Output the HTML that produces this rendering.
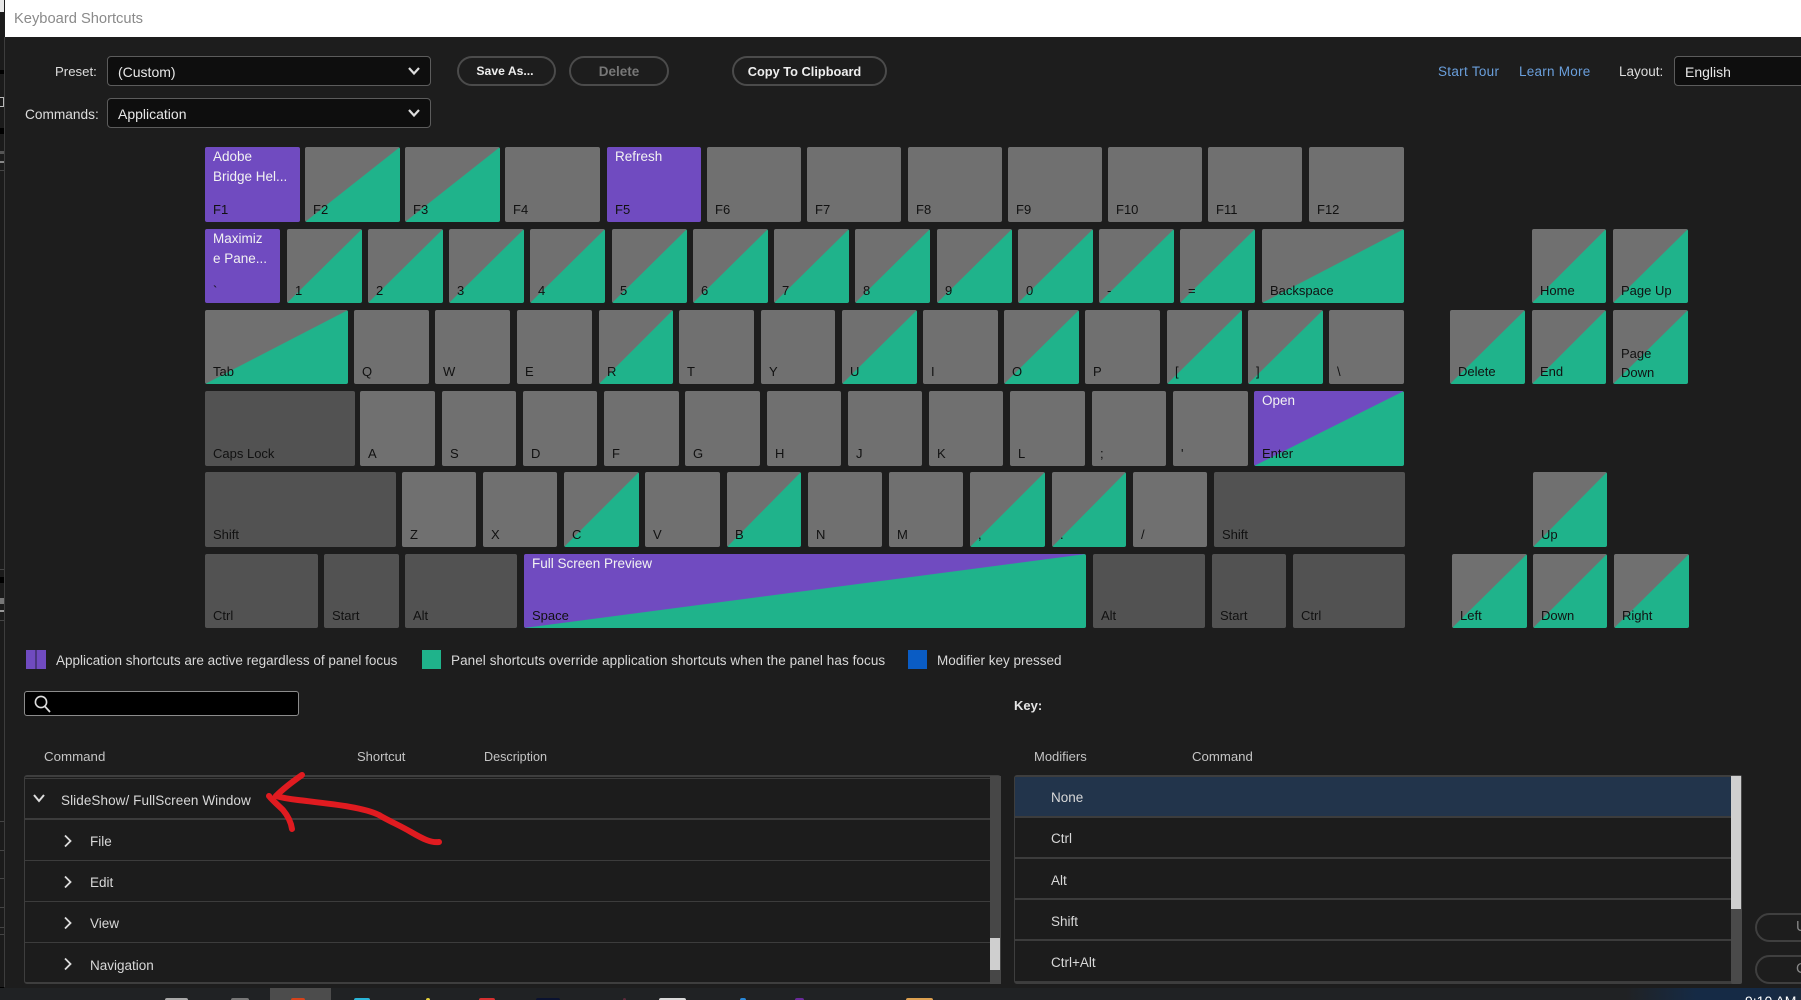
<!DOCTYPE html>
<html><head><meta charset="utf-8"><title>Keyboard Shortcuts</title>
<style>
html,body{margin:0;padding:0;width:1801px;height:1000px;overflow:hidden;background:#1d1d1d}
body{position:relative;font-family:"Liberation Sans",sans-serif;font-size:13.5px;color:#d8d8d8}
.a{position:absolute;white-space:nowrap}
.t{position:absolute;white-space:nowrap;line-height:18px;height:18px}
.k{position:absolute;background:#707070;border-radius:2px;overflow:hidden;color:#111;font-size:13px}
.k b{position:absolute;left:8px;bottom:4px;font-weight:normal;line-height:16px;white-space:nowrap}
.k i{position:absolute;left:8px;top:0;font-style:normal;font-size:13.5px;color:#f2f2f2;line-height:19.5px;white-space:nowrap}
.d{background:#525252}
.g{background:linear-gradient(to bottom right,#707070 49.7%,#1fb38b 50.3%)}
.p{background:#704bc0}
.pg{background:linear-gradient(to bottom right,#704bc0 49.8%,#1fb38b 50.2%)}
.r1{top:147px;height:75px}.r2{top:229px;height:74px}.r3{top:310px;height:74px}
.r4{top:391px;height:75px}.r5{top:472px;height:75px}.r6{top:554px;height:74px}
.sel{position:absolute;background:#0e0e0e;border:1px solid #5c5c5c;border-radius:4px;box-sizing:border-box;height:30px;left:107px;width:324px;color:#e8e8e8;line-height:30px;padding-left:10px;font-size:14px}
.btn{position:absolute;top:56px;height:30px;box-sizing:border-box;border:2px solid #4b4b4b;border-radius:15px;text-align:center;line-height:27px;font-weight:bold;font-size:12.5px;color:#eee}
.ln{position:absolute;height:1px;background:#3c3c3c}
.s{position:absolute;left:0;width:4px}
.ti{position:absolute;top:998px;height:2px;border-radius:2px 2px 0 0}
</style></head><body>

<div class="a" style="left:5px;top:0;width:1796px;height:37px;background:#fff"></div>
<div class="t" style="left:14px;top:10px;color:#8a8a8a;font-size:14.7px">Keyboard Shortcuts</div>

<!-- left strip -->
<div class="a" style="left:4px;top:37px;width:1px;height:950px;background:#3d3d3d"></div>
<div class="s" style="top:0;height:12px;background:#e8e8e8"></div>
<div class="s" style="top:12px;height:976px;background:#1b1b1b"></div>
<div class="s" style="top:70px;height:4px;background:#000"></div>
<div class="s" style="top:97px;height:10px;border:1px solid #bbb;border-left:0;box-sizing:border-box"></div>
<div class="s" style="top:128px;height:6px;background:#000"></div>
<div class="s" style="top:151px;height:3px;background:#555"></div>
<div class="s" style="top:161px;height:2px;background:#888"></div>
<div class="s" style="top:170px;height:1px;background:#444"></div>
<div class="s" style="top:569px;height:1px;background:#444"></div>
<div class="s" style="top:577px;height:6px;background:#000"></div>
<div class="s" style="top:598px;height:6px;background:#777"></div>
<div class="s" style="top:610px;height:2px;background:#999"></div>
<div class="s" style="top:620px;height:1px;background:#444"></div>
<div class="s" style="top:821px;height:1px;background:#444"></div>
<div class="s" style="top:850px;height:1px;background:#444"></div>
<div class="s" style="top:878px;height:1px;background:#444"></div>
<div class="s" style="top:907px;height:1px;background:#444"></div>
<div class="s" style="top:927px;height:1px;background:#444"></div>
<div class="s" style="top:934px;height:1px;background:#444"></div>
<div class="s" style="top:987px;height:1px;background:#000"></div>

<!-- top controls -->
<div class="t" style="left:55px;top:63px;color:#ddd;font-size:13.2px">Preset:</div>
<div class="t" style="left:25px;top:106px;color:#ddd;font-size:13.7px">Commands:</div>
<div class="sel" style="top:56px">(Custom)<svg style="position:absolute;left:299px;top:9px" width="14" height="10"><polyline points="2,2 7,7.5 12,2" fill="none" stroke="#ddd" stroke-width="2.2"/></svg></div>
<div class="sel" style="top:98px">Application<svg style="position:absolute;left:299px;top:9px" width="14" height="10"><polyline points="2,2 7,7.5 12,2" fill="none" stroke="#ddd" stroke-width="2.2"/></svg></div>
<div class="btn" style="left:457px;width:99px;font-size:12.2px;padding-right:3px">Save As...</div>
<div class="btn" style="left:569px;width:100px;color:#777;font-size:13.5px">Delete</div>
<div class="btn" style="left:732px;width:155px;font-size:12.8px;padding-right:10px">Copy To Clipboard</div>
<div class="t" style="left:1438px;top:63px;color:#6a9fdc;letter-spacing:.3px">Start Tour</div>
<div class="t" style="left:1519px;top:63px;color:#6a9fdc;letter-spacing:.25px">Learn More</div>
<div class="t" style="left:1619px;top:63px;color:#ddd">Layout:</div>
<div class="sel" style="left:1674px;top:56px;width:140px">English</div>

<!-- keyboard row 1 -->
<div class="k p r1" style="left:205px;width:95px"><i>Adobe<br>Bridge Hel...</i><b>F1</b></div>
<div class="k g r1" style="left:305px;width:95px"><b>F2</b></div>
<div class="k g r1" style="left:405px;width:95px"><b>F3</b></div>
<div class="k r1" style="left:505px;width:95px"><b>F4</b></div>
<div class="k p r1" style="left:607px;width:94px"><i>Refresh</i><b>F5</b></div>
<div class="k r1" style="left:707px;width:94px"><b>F6</b></div>
<div class="k r1" style="left:807px;width:94px"><b>F7</b></div>
<div class="k r1" style="left:908px;width:94px"><b>F8</b></div>
<div class="k r1" style="left:1008px;width:94px"><b>F9</b></div>
<div class="k r1" style="left:1108px;width:94px"><b>F10</b></div>
<div class="k r1" style="left:1208px;width:94px"><b>F11</b></div>
<div class="k r1" style="left:1309px;width:95px"><b>F12</b></div>
<!-- row 2 -->
<div class="k p r2" style="left:205px;width:75px"><i>Maximiz<br>e Pane...</i><b>`</b></div>
<div class="k g r2" style="left:287px;width:75px"><b>1</b></div>
<div class="k g r2" style="left:368px;width:75px"><b>2</b></div>
<div class="k g r2" style="left:449px;width:75px"><b>3</b></div>
<div class="k g r2" style="left:530px;width:75px"><b>4</b></div>
<div class="k g r2" style="left:612px;width:75px"><b>5</b></div>
<div class="k g r2" style="left:693px;width:75px"><b>6</b></div>
<div class="k g r2" style="left:774px;width:75px"><b>7</b></div>
<div class="k g r2" style="left:855px;width:75px"><b>8</b></div>
<div class="k g r2" style="left:937px;width:75px"><b>9</b></div>
<div class="k g r2" style="left:1018px;width:75px"><b>0</b></div>
<div class="k g r2" style="left:1099px;width:75px"><b>-</b></div>
<div class="k g r2" style="left:1180px;width:75px"><b>=</b></div>
<div class="k g r2" style="left:1262px;width:142px"><b>Backspace</b></div>
<div class="k g r2" style="left:1532px;width:74px"><b>Home</b></div>
<div class="k g r2" style="left:1613px;width:75px"><b>Page Up</b></div>
<!-- row 3 -->
<div class="k g r3" style="left:205px;width:143px"><b>Tab</b></div>
<div class="k r3" style="left:354px;width:75px"><b>Q</b></div>
<div class="k r3" style="left:435px;width:75px"><b>W</b></div>
<div class="k r3" style="left:517px;width:75px"><b>E</b></div>
<div class="k g r3" style="left:599px;width:74px"><b>R</b></div>
<div class="k r3" style="left:679px;width:75px"><b>T</b></div>
<div class="k r3" style="left:761px;width:74px"><b>Y</b></div>
<div class="k g r3" style="left:842px;width:75px"><b>U</b></div>
<div class="k r3" style="left:923px;width:75px"><b>I</b></div>
<div class="k g r3" style="left:1004px;width:75px"><b>O</b></div>
<div class="k r3" style="left:1085px;width:75px"><b>P</b></div>
<div class="k g r3" style="left:1167px;width:75px"><b>[</b></div>
<div class="k g r3" style="left:1248px;width:75px"><b>]</b></div>
<div class="k r3" style="left:1329px;width:75px"><b>\</b></div>
<div class="k g r3" style="left:1450px;width:75px"><b>Delete</b></div>
<div class="k g r3" style="left:1532px;width:74px"><b>End</b></div>
<div class="k g r3" style="left:1613px;width:75px"><b style="white-space:normal;line-height:19px;width:50px;bottom:2px">Page Down</b></div>
<!-- row 4 -->
<div class="k d r4" style="left:205px;width:150px"><b>Caps Lock</b></div>
<div class="k r4" style="left:360px;width:75px"><b>A</b></div>
<div class="k r4" style="left:442px;width:74px"><b>S</b></div>
<div class="k r4" style="left:523px;width:74px"><b>D</b></div>
<div class="k r4" style="left:604px;width:75px"><b>F</b></div>
<div class="k r4" style="left:685px;width:75px"><b>G</b></div>
<div class="k r4" style="left:767px;width:74px"><b>H</b></div>
<div class="k r4" style="left:848px;width:74px"><b>J</b></div>
<div class="k r4" style="left:929px;width:74px"><b>K</b></div>
<div class="k r4" style="left:1010px;width:75px"><b>L</b></div>
<div class="k r4" style="left:1092px;width:74px"><b>;</b></div>
<div class="k r4" style="left:1173px;width:75px"><b>'</b></div>
<div class="k pg r4" style="left:1254px;width:150px"><i>Open</i><b>Enter</b></div>
<!-- row 5 -->
<div class="k d r5" style="left:205px;width:191px"><b>Shift</b></div>
<div class="k r5" style="left:402px;width:74px"><b>Z</b></div>
<div class="k r5" style="left:483px;width:74px"><b>X</b></div>
<div class="k g r5" style="left:564px;width:75px"><b>C</b></div>
<div class="k r5" style="left:645px;width:75px"><b>V</b></div>
<div class="k g r5" style="left:727px;width:74px"><b>B</b></div>
<div class="k r5" style="left:808px;width:74px"><b>N</b></div>
<div class="k r5" style="left:889px;width:74px"><b>M</b></div>
<div class="k g r5" style="left:970px;width:75px"><b>,</b></div>
<div class="k g r5" style="left:1052px;width:74px"><b>.</b></div>
<div class="k r5" style="left:1133px;width:74px"><b>/</b></div>
<div class="k d r5" style="left:1214px;width:191px"><b>Shift</b></div>
<div class="k g r5" style="left:1533px;width:74px"><b>Up</b></div>
<!-- row 6 -->
<div class="k d r6" style="left:205px;width:113px"><b>Ctrl</b></div>
<div class="k d r6" style="left:324px;width:75px"><b>Start</b></div>
<div class="k d r6" style="left:405px;width:112px"><b>Alt</b></div>
<div class="k pg r6" style="left:524px;width:562px"><i>Full Screen Preview</i><b>Space</b></div>
<div class="k d r6" style="left:1093px;width:112px"><b>Alt</b></div>
<div class="k d r6" style="left:1212px;width:74px"><b>Start</b></div>
<div class="k d r6" style="left:1293px;width:112px"><b>Ctrl</b></div>
<div class="k g r6" style="left:1452px;width:75px"><b>Left</b></div>
<div class="k g r6" style="left:1533px;width:74px"><b>Down</b></div>
<div class="k g r6" style="left:1614px;width:75px"><b>Right</b></div>

<!-- legend -->
<div class="a" style="left:26px;top:650px;width:20px;height:19px;background:linear-gradient(to right,#704bc0 46%,#4a3580 46%,#4a3580 54%,#704bc0 54%)"></div>
<div class="t" style="left:56px;top:652px">Application shortcuts are active regardless of panel focus</div>
<div class="a" style="left:422px;top:650px;width:19px;height:19px;background:#1fb38b"></div>
<div class="t" style="left:451px;top:652px;letter-spacing:.07px">Panel shortcuts override application shortcuts when the panel has focus</div>
<div class="a" style="left:908px;top:650px;width:19px;height:19px;background:#0a5cc4"></div>
<div class="t" style="left:937px;top:652px">Modifier key pressed</div>

<!-- search -->
<div class="a" style="left:24px;top:691px;width:275px;height:25px;box-sizing:border-box;background:#000;border:1px solid #8c8c8c;border-radius:3px"></div>
<svg class="a" style="left:32px;top:693px" width="20" height="22"><circle cx="9" cy="9" r="5.6" fill="none" stroke="#ddd" stroke-width="1.6"/><line x1="13" y1="13.5" x2="18" y2="19" stroke="#ddd" stroke-width="1.8"/></svg>
<div class="t" style="left:1014px;top:697px;font-weight:bold;font-size:13px;color:#e4e4e4">Key:</div>

<!-- headers -->
<div class="t" style="left:44px;top:748px;color:#c4c4c4;font-size:13.3px">Command</div>
<div class="t" style="left:357px;top:748px;color:#c4c4c4;font-size:13px">Shortcut</div>
<div class="t" style="left:484px;top:748px;color:#c4c4c4;font-size:12.6px">Description</div>
<div class="t" style="left:1034px;top:748px;color:#c4c4c4;font-size:13px">Modifiers</div>
<div class="t" style="left:1192px;top:748px;color:#c4c4c4;font-size:13.2px">Command</div>

<!-- left table -->
<div class="a" style="left:24px;top:775px;width:977px;height:209px;box-sizing:border-box;border:1px solid #3e3e3e;border-top:2px solid #3e3e3e;border-bottom:2px solid #3e3e3e;border-radius:3px;background:#1c1c1c"></div>
<div class="ln" style="left:25px;top:778px;width:965px"></div>
<div class="ln" style="left:25px;top:818px;width:965px;height:2px"></div>
<div class="ln" style="left:25px;top:860px;width:965px"></div>
<div class="ln" style="left:25px;top:901px;width:965px"></div>
<div class="ln" style="left:25px;top:942px;width:965px"></div>
<div class="a" style="left:990px;top:776px;width:11px;height:208px;background:#474747"></div>
<div class="a" style="left:990px;top:938px;width:10px;height:32px;background:#cfcfcf"></div>
<svg class="a" style="left:32px;top:793px" width="14" height="12"><polyline points="2,2 7,8 12,2" fill="none" stroke="#ddd" stroke-width="2"/></svg>
<svg class="a" style="left:63px;top:834px" width="10" height="14"><polyline points="2,1.5 7.5,7 2,12.5" fill="none" stroke="#ddd" stroke-width="1.8"/></svg>
<svg class="a" style="left:63px;top:875px" width="10" height="14"><polyline points="2,1.5 7.5,7 2,12.5" fill="none" stroke="#ddd" stroke-width="1.8"/></svg>
<svg class="a" style="left:63px;top:916px" width="10" height="14"><polyline points="2,1.5 7.5,7 2,12.5" fill="none" stroke="#ddd" stroke-width="1.8"/></svg>
<svg class="a" style="left:63px;top:957px" width="10" height="14"><polyline points="2,1.5 7.5,7 2,12.5" fill="none" stroke="#ddd" stroke-width="1.8"/></svg>
<div class="t" style="left:61px;top:792px;letter-spacing:.08px">SlideShow/ FullScreen Window</div>
<div class="t" style="left:90px;top:833px">File</div>
<div class="t" style="left:90px;top:874px">Edit</div>
<div class="t" style="left:90px;top:915px">View</div>
<div class="t" style="left:90px;top:957px">Navigation</div>

<!-- right table -->
<div class="a" style="left:1014px;top:775px;width:728px;height:209px;box-sizing:border-box;border:1px solid #3e3e3e;border-top:2px solid #3e3e3e;border-bottom:2px solid #3e3e3e;border-radius:3px;background:#1c1c1c"></div>
<div class="a" style="left:1015px;top:777px;width:716px;height:39px;background:#22344b"></div>
<div class="ln" style="left:1015px;top:816px;width:716px;height:2px"></div>
<div class="ln" style="left:1015px;top:857px;width:716px;height:2px"></div>
<div class="ln" style="left:1015px;top:898px;width:716px;height:2px"></div>
<div class="ln" style="left:1015px;top:939px;width:716px;height:2px"></div>
<div class="ln" style="left:1015px;top:981px;width:716px;height:1px"></div>
<div class="a" style="left:1731px;top:775px;width:11px;height:209px;background:#4a4a4a;border-radius:2px"></div>
<div class="a" style="left:1731px;top:776px;width:10px;height:133px;background:#cfcfcf"></div>
<div class="t" style="left:1051px;top:789px">None</div>
<div class="t" style="left:1051px;top:830px">Ctrl</div>
<div class="t" style="left:1051px;top:872px">Alt</div>
<div class="t" style="left:1051px;top:913px">Shift</div>
<div class="t" style="left:1051px;top:954px">Ctrl+Alt</div>

<!-- right cut-off buttons -->
<div class="a" style="left:1755px;top:913px;width:80px;height:29px;box-sizing:border-box;border:2px solid #3f3f3f;border-radius:15px;color:#888;line-height:25px;padding-left:39px;font-size:14.5px">U</div>
<div class="a" style="left:1755px;top:955px;width:80px;height:29px;box-sizing:border-box;border:2px solid #3f3f3f;border-radius:15px;color:#888;line-height:25px;padding-left:39px;font-size:14.5px">C</div>

<!-- taskbar -->
<div class="a" style="left:0;top:988px;width:1801px;height:12px;background:#202224"></div>
<div class="a" style="left:1626px;top:988px;width:175px;height:12px;background:linear-gradient(to right,#202224,#152a45 40%,#152a45 80%,#1b2a3c)"></div>
<div class="a" style="left:270px;top:988px;width:61px;height:12px;background:#4c4c4c"></div>
<div class="ti" style="left:165px;width:23px;background:#a8a8a8"></div>
<div class="ti" style="left:231px;width:18px;background:#777;border-radius:8px 8px 0 0"></div>
<div class="ti" style="left:291px;width:14px;background:#d5421a;border-radius:7px 7px 0 0"></div>
<div class="ti" style="left:354px;width:16px;background:#2ab5d8;border-radius:8px 8px 0 0"></div>
<div class="ti" style="left:426px;width:4px;background:#e6d23c"></div>
<div class="ti" style="left:479px;width:16px;background:#d53030;border-radius:8px 8px 0 0"></div>
<div class="ti" style="left:536px;width:24px;background:#0a1230"></div>
<div class="ti" style="left:623px;width:3px;background:#5a2a3a"></div>
<div class="ti" style="left:659px;width:27px;background:#d8d8d8"></div>
<div class="ti" style="left:740px;width:6px;background:#2a88d8"></div>
<div class="ti" style="left:795px;width:9px;background:#6a2a9a"></div>
<div class="ti" style="left:906px;width:27px;background:#dca050"></div>
<div class="a" style="left:1745px;top:993px;height:7px;overflow:hidden;color:#fff;font-size:14px;line-height:16px">9:10 AM</div>

<!-- red arrow annotation -->
<svg class="a" style="left:0;top:0;pointer-events:none" width="1801" height="1000">
<g fill="none" stroke="#e01b20" stroke-width="6" stroke-linecap="round" stroke-linejoin="round">
<path d="M439 842 C431 843 423 839 411 832 C399 825 391 822 379 815 C363 807 331 804 298 800 C289 799 283 798 276 796"/>
<path d="M302 775 C292 782 284 788 276 796"/>
<path d="M269 796 C273 801 279 806 283 810 C288 816 291 822 292 829"/>
</g></svg>
</body></html>
